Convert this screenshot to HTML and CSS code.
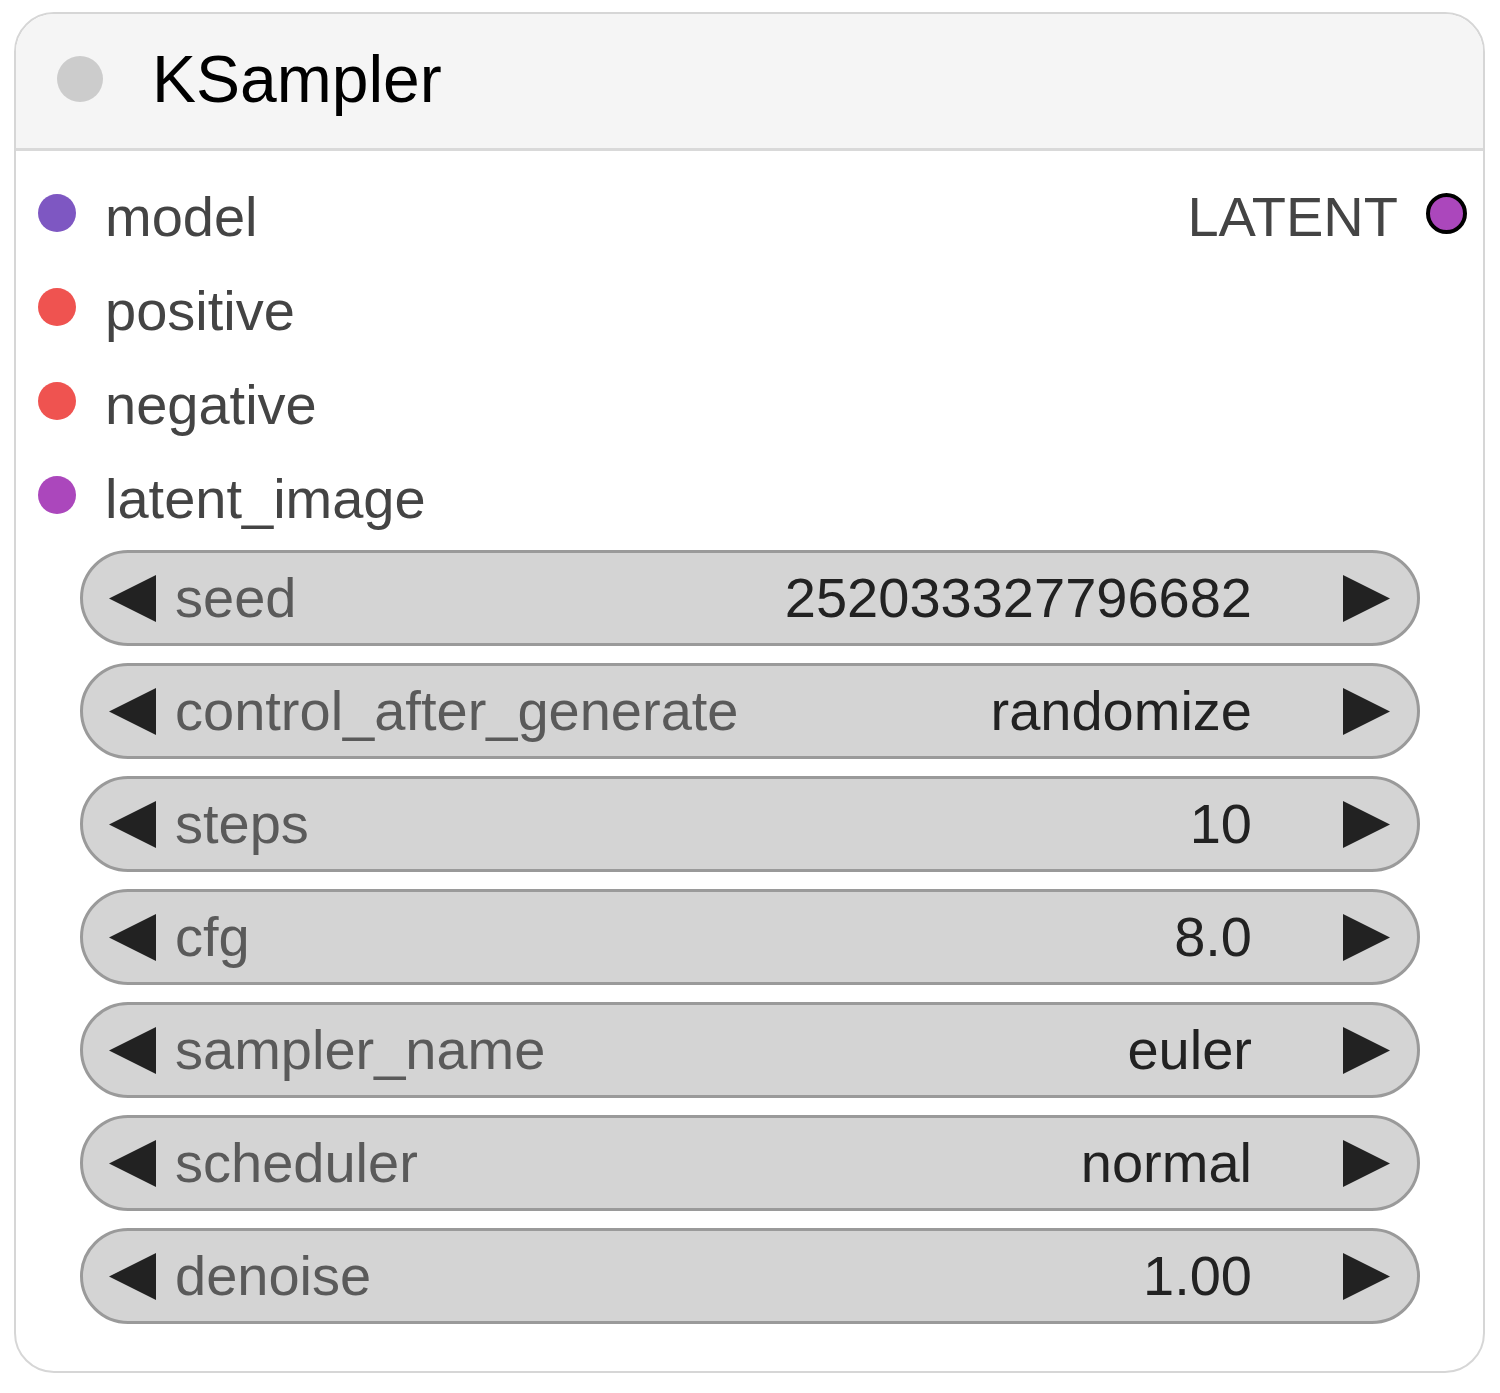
FILE: index.html
```html
<!DOCTYPE html>
<html>
<head>
<meta charset="utf-8">
<link rel="stylesheet" href="styles.css">
</head>
<body>
<div class="node">
  <div class="header">
    <span class="status-dot"></span>
    <span class="title">KSampler</span>
  </div>
  <div class="body">
    <div class="slot-row">
      <div class="input"><span class="dot dot-model"></span><span class="label">model</span></div>
      <div class="output"><span class="label">LATENT</span><span class="dot dot-out"></span></div>
    </div>
    <div class="slot-row">
      <div class="input"><span class="dot dot-cond"></span><span class="label">positive</span></div>
    </div>
    <div class="slot-row">
      <div class="input"><span class="dot dot-cond"></span><span class="label">negative</span></div>
    </div>
    <div class="slot-row">
      <div class="input"><span class="dot dot-latent"></span><span class="label">latent_image</span></div>
    </div>
    <div class="widgets">
      <div class="widget">
        <svg class="arrow" viewBox="0 0 47 47"><polygon points="47,0 47,47 0,23.5"/></svg>
        <span class="w-label">seed</span><span class="w-value">252033327796682</span>
        <svg class="arrow" viewBox="0 0 47 47"><polygon points="0,0 0,47 47,23.5"/></svg>
      </div>
      <div class="widget">
        <svg class="arrow" viewBox="0 0 47 47"><polygon points="47,0 47,47 0,23.5"/></svg>
        <span class="w-label">control_after_generate</span><span class="w-value">randomize</span>
        <svg class="arrow" viewBox="0 0 47 47"><polygon points="0,0 0,47 47,23.5"/></svg>
      </div>
      <div class="widget">
        <svg class="arrow" viewBox="0 0 47 47"><polygon points="47,0 47,47 0,23.5"/></svg>
        <span class="w-label">steps</span><span class="w-value">10</span>
        <svg class="arrow" viewBox="0 0 47 47"><polygon points="0,0 0,47 47,23.5"/></svg>
      </div>
      <div class="widget">
        <svg class="arrow" viewBox="0 0 47 47"><polygon points="47,0 47,47 0,23.5"/></svg>
        <span class="w-label">cfg</span><span class="w-value">8.0</span>
        <svg class="arrow" viewBox="0 0 47 47"><polygon points="0,0 0,47 47,23.5"/></svg>
      </div>
      <div class="widget">
        <svg class="arrow" viewBox="0 0 47 47"><polygon points="47,0 47,47 0,23.5"/></svg>
        <span class="w-label">sampler_name</span><span class="w-value">euler</span>
        <svg class="arrow" viewBox="0 0 47 47"><polygon points="0,0 0,47 47,23.5"/></svg>
      </div>
      <div class="widget">
        <svg class="arrow" viewBox="0 0 47 47"><polygon points="47,0 47,47 0,23.5"/></svg>
        <span class="w-label">scheduler</span><span class="w-value">normal</span>
        <svg class="arrow" viewBox="0 0 47 47"><polygon points="0,0 0,47 47,23.5"/></svg>
      </div>
      <div class="widget">
        <svg class="arrow" viewBox="0 0 47 47"><polygon points="47,0 47,47 0,23.5"/></svg>
        <span class="w-label">denoise</span><span class="w-value">1.00</span>
        <svg class="arrow" viewBox="0 0 47 47"><polygon points="0,0 0,47 47,23.5"/></svg>
      </div>
    </div>
  </div>
</div>
</body>
</html>
```

FILE: styles.css
```css
* { box-sizing: border-box; }
html, body { margin: 0; padding: 0; background: #ffffff; }
body {
  font-family: "Liberation Sans", Arial, Helvetica, sans-serif;
}
.node {
  margin: 12px 0 0 14px;
  width: 1471px;
  height: 1361px;
  border: 2px solid #d6d6d6;
  border-radius: 40px;
  overflow: hidden;
  background: #ffffff;
}
.header {
  height: 137px;
  background: #f5f5f5;
  border-bottom: 3px solid #d9d9d9;
  display: flex;
  align-items: center;
  padding-left: 41px;
  padding-bottom: 4px;
}
.status-dot {
  width: 46px;
  height: 46px;
  border-radius: 50%;
  background: #cccccc;
  flex: none;
}
.title {
  margin-left: 49px;
  font-size: 66px;
  color: #000000;
  line-height: 1;
}
.body {
  padding: 15px 16px 0 22px;
}
.slot-row {
  height: 94px;
  display: flex;
  align-items: center;
  justify-content: space-between;
}
.input, .output {
  display: flex;
  align-items: center;
}
.label {
  font-size: 56px;
  color: #444444;
  line-height: 1;
  padding-top: 8px;
}
.input .label { margin-left: 29px; }
.output .label { margin-right: 28px; }
.dot {
  width: 38px;
  height: 38px;
  border-radius: 50%;
  flex: none;
}
.dot-model { background: #7e57c2; }
.dot-cond { background: #ef5350; }
.dot-latent { background: #ab47bc; }
.dot-out {
  width: 41px;
  height: 41px;
  background: #ab47bc;
  border: 4px solid #000000;
}
.widgets {
  margin: 8px 47px 0 42px;
  display: flex;
  flex-direction: column;
  gap: 17px;
}
.widget {
  height: 96px;
  border: 3px solid #9a9a9a;
  border-radius: 48px;
  background: #d4d4d4;
  display: flex;
  align-items: center;
  padding: 0 27px 0 26px;
}
.arrow {
  width: 47px;
  height: 47px;
  flex: none;
  fill: #222222;
}
.w-label {
  margin-left: 19px;
  font-size: 56px;
  color: #5a5a5a;
  line-height: 1;
  flex: 1;
  white-space: nowrap;
}
.w-value {
  margin-right: 91px;
  font-size: 56px;
  color: #222222;
  line-height: 1;
  white-space: nowrap;
}
```
